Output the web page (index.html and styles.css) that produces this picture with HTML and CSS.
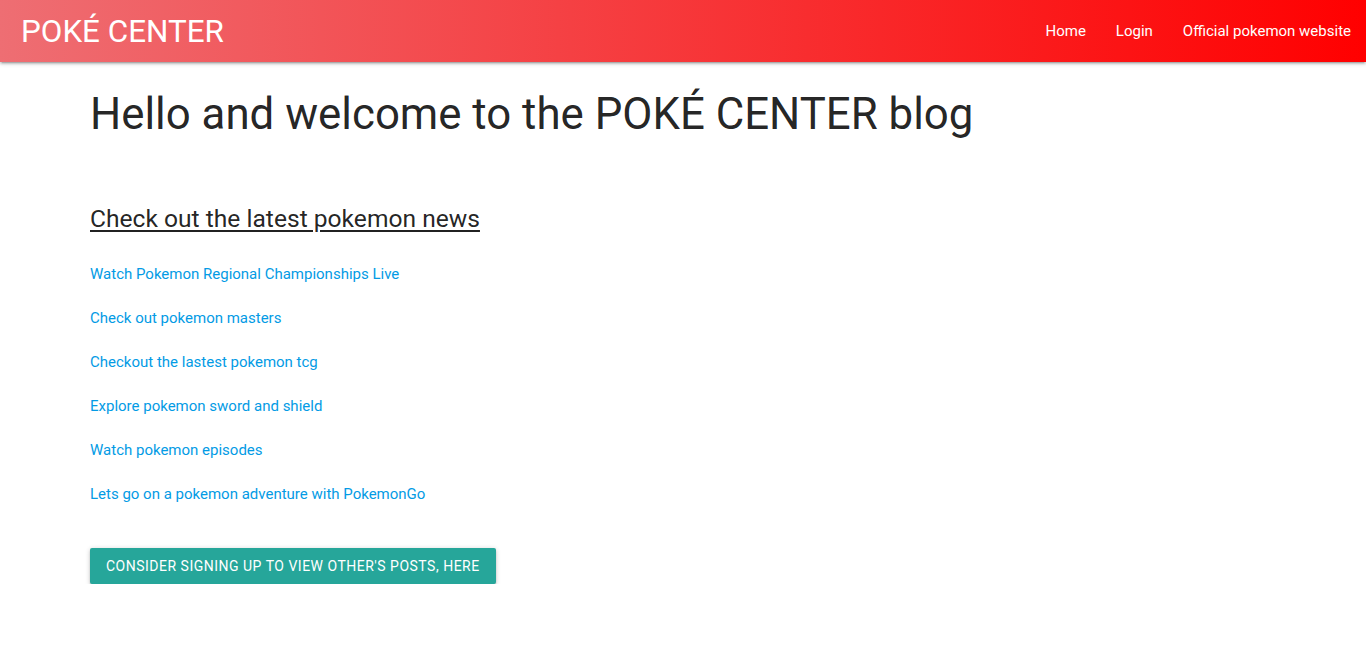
FILE: index.html
```html
<!DOCTYPE html>
<html lang="en">
<head>
<meta charset="utf-8">
<title>POKÉ CENTER</title>
<link rel="stylesheet" href="styles.css">
</head>
<body>
<nav class="navbar">
  <a class="brand" href="#">POKÉ CENTER</a>
  <ul class="nav-links">
    <li><a href="#">Home</a></li>
    <li><a href="#">Login</a></li>
    <li><a href="#">Official pokemon website</a></li>
  </ul>
</nav>
<main class="container">
  <h1 class="title">Hello and welcome to the POKÉ CENTER blog</h1>
  <h2 class="subtitle">Check out the latest pokemon news</h2>
  <ul class="news">
    <li><a href="#">Watch Pokemon Regional Championships Live</a></li>
    <li><a href="#">Check out pokemon masters</a></li>
    <li><a href="#">Checkout the lastest pokemon tcg</a></li>
    <li><a href="#">Explore pokemon sword and shield</a></li>
    <li><a href="#">Watch pokemon episodes</a></li>
    <li><a href="#">Lets go on a pokemon adventure with PokemonGo</a></li>
  </ul>
  <a class="btn" href="#">Consider signing up to view other's posts, here</a>
</main>
</body>
</html>
```
FILE: styles.css
```css
* { box-sizing: border-box; }
html, body { margin: 0; padding: 0; }
body {
  font-family: Roboto, "Noto Sans", sans-serif;
  color: rgba(0,0,0,0.87);
  background: #fff;
}
a { text-decoration: none; }

.navbar {
  height: 62px;
  display: flex;
  align-items: center;
  justify-content: space-between;
  background: linear-gradient(to right, #ee6e73, #ff0000);
  box-shadow: 0 2px 2px 0 rgba(0,0,0,0.14), 0 3px 1px -2px rgba(0,0,0,0.12), 0 1px 5px 0 rgba(0,0,0,0.2);
  padding-left: 21px;
}
.brand {
  color: #fff;
  font-size: 31.4px;
  font-weight: 400;
}
.nav-links {
  list-style: none;
  display: flex;
  margin: 0;
  padding: 0;
}
.nav-links a {
  display: block;
  color: #fff;
  font-size: 15px;
  padding: 0 15px;
  line-height: 62px;
}

.container {
  padding-left: 90px;
}
.title {
  font-size: 43.8px;
  font-weight: 400;
  line-height: 52px;
  margin: 26px 0 0;
}
.subtitle {
  font-size: 24.6px;
  font-weight: 400;
  text-decoration: underline;
  text-underline-offset: 3px;
  margin: 65px 0 0;
  line-height: 28px;
}
.news {
  list-style: none;
  padding: 0;
  margin: 32px 0 0;
}
.news li {
  height: 44px;
  font-size: 15px;
}
.news a {
  color: #039be5;
}
.btn {
  display: inline-block;
  margin-top: 19px;
  height: 36px;
  line-height: 36px;
  padding: 0 16px;
  background: #26a69a;
  color: #fff;
  font-size: 14px;
  text-transform: uppercase;
  letter-spacing: 0.5px;
  border-radius: 2px;
  box-shadow: 0 2px 2px 0 rgba(0,0,0,0.14), 0 3px 1px -2px rgba(0,0,0,0.12), 0 1px 5px 0 rgba(0,0,0,0.2);
}
```
